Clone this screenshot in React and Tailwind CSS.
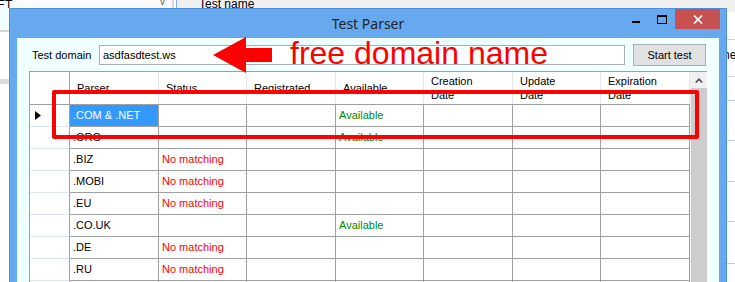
import React from 'react'

const rows = [
  { name: '.COM & .NET', status: '', avail: 'Available', selected: true },
  { name: '.ORG', status: '', avail: 'Available' },
  { name: '.BIZ', status: 'No matching', avail: '' },
  { name: '.MOBI', status: 'No matching', avail: '' },
  { name: '.EU', status: 'No matching', avail: '' },
  { name: '.CO.UK', status: '', avail: 'Available' },
  { name: '.DE', status: 'No matching', avail: '' },
  { name: '.RU', status: 'No matching', avail: '' },
  { name: '', status: '', avail: '' },
]

export default function App() {
  return (
    <div className="relative h-[282px] w-[735px] overflow-hidden bg-[#f0f0f0] font-['Liberation_Sans',Arial,sans-serif] text-[11px] text-black">
      <Backdrop />
      <ParserWindow />

      {/* annotation drawn over the screenshot */}
      <svg className="absolute left-0 top-0" width="735" height="282">
        <polygon points="213,55 246,37 246,48 272,48 272,62 246,62 246,73" fill="#ff0000" />
      </svg>
      <span className="absolute left-[290px] top-[37px] text-[32px] leading-[32px] text-[#ff0000]">free domain name</span>
      <div className="absolute left-[52px] top-[90px] h-[49px] w-[647px] rounded-[2px] border-4 border-[#ff0000]" />
    </div>
  )
}

function Backdrop() {
  return (
    <div className="flex h-full flex-col">
      <div className="flex h-[8px] overflow-hidden">
        <div className="relative w-[172px] bg-[#fbfbfb]">
          <span className="absolute -top-[4px] -left-[3px] text-[12px]">ET</span>
          <span className="absolute -top-[6px] left-[160px] text-[10px] text-[#606060]">v</span>
        </div>
        <div className="w-[2px] bg-[#d8d8d8]" />
        <div className="w-[2px] bg-white" />
        <div className="w-[1px] bg-[#7eb4ea]" />
        <div className="relative flex-1 bg-[#f0f0f0]">
          <span className="absolute -top-[5px] left-[22px] text-[12px]">Test name</span>
        </div>
      </div>
      <div className="flex flex-1">
        <div className="w-[9px] bg-white">
          <div className="h-[22px] bg-[#f0ffff]" />
          <div className="h-[2px] bg-[#d4d4d4]" />
          <div className="h-[47px]" />
          <div className="h-[5px] bg-[#dcdcdc]" />
        </div>
        <div className="flex-1" />
        <div className="w-[8px] bg-white">
          <div className="h-[4px] bg-[#f0f0f0]" />
          <div className="h-[28px] border-b border-[#d0d0d0]" />
          <div className="relative h-[37px] border-b border-[#d0d0d0]">
            <span className="absolute top-[6px] -left-[4px] text-[12px]">ne</span>
          </div>
          <div className="h-[24px] border-b border-[#b8cce8]" />
          <div className="h-[40px] border-b border-[#b8cce8]" />
          <div className="h-[41px] border-b border-[#b8cce8]" />
          <div className="h-[40px] border-b border-[#b8cce8]" />
          <div className="h-[42px] border-b border-[#b8cce8]" />
        </div>
      </div>
    </div>
  )
}

function ParserWindow() {
  return (
    <div className="absolute left-[9px] top-[8px] flex h-[290px] w-[718px] flex-col border border-[#4f8fd8] bg-[#66a9ef]">
      <div className="relative flex h-[29px] shrink-0 items-center justify-center">
        <span className="font-['Noto_Sans',sans-serif] text-[14px] text-[#222]">Test Parser</span>
        <div className="absolute left-[622px] top-[12px] h-[2px] w-[8px] bg-black" />
        <div className="absolute left-[647px] top-[6px] h-[9px] w-[10px] border border-t-2 border-black" />
        <div className="absolute right-[6px] top-0 flex h-[20px] w-[45px] items-center justify-center bg-[#c75050]">
          <svg width="10" height="9" viewBox="0 0 10 9">
            <path d="M1 0.5 L9 8.5 M9 0.5 L1 8.5" stroke="white" strokeWidth="1.7" />
          </svg>
        </div>
      </div>

      <div className="mx-[7px] flex-1 bg-[#f0ffff]">
        <div className="flex h-[22px] items-center pl-[15px] pr-[13px] pt-0 mt-[6px]">
          <span className="w-[67px]">Test domain</span>
          <div className="flex h-[20px] w-[526px] items-center border border-[#abadb3] bg-white pl-[3px]">asdfasdtest.ws</div>
          <button className="ml-[8px] h-[22px] w-[73px] border border-[#adadad] bg-[#e1e1e1] text-[11px]">Start test</button>
        </div>

        <div className="ml-[12px] mt-[5px] flex w-[678px] border-l border-t border-[#a0a0a0] bg-white">
          <div className="w-[660px]">
            <div className="flex h-[33px] border-b border-[#a0a0a0]">
              <div className="w-[40px] border-r border-[#a0a0a0]" />
              <HeadCell w="w-[89px]">Parser</HeadCell>
              <HeadCell w="w-[88px]">Status</HeadCell>
              <HeadCell w="w-[89px]">Registrated</HeadCell>
              <HeadCell w="w-[88px]">Available</HeadCell>
              <HeadCell w="w-[89px]">Creation<br />Date</HeadCell>
              <HeadCell w="w-[88px]">Update<br />Date</HeadCell>
              <HeadCell w="w-[89px]">Expiration<br />Date</HeadCell>
            </div>
            {rows.map((r, i) => (
              <div key={i} className="flex h-[22px]">
                <div className="flex w-[40px] items-center border-r border-b border-r-[#a0a0a0] border-b-[#dde7f4] pl-[5px]">
                  {r.selected && (
                    <svg width="6" height="9" viewBox="0 0 6 9"><polygon points="0,0 6,4.5 0,9" fill="black" /></svg>
                  )}
                </div>
                <Cell w="w-[89px]" selected={r.selected}>{r.name}</Cell>
                <Cell w="w-[88px]"><span className="text-[#ff0000]">{r.status}</span></Cell>
                <Cell w="w-[89px]" />
                <Cell w="w-[88px]"><span className="text-[#008a00]">{r.avail}</span></Cell>
                <Cell w="w-[89px]" />
                <Cell w="w-[88px]" />
                <Cell w="w-[89px]" />
              </div>
            ))}
          </div>
          <div className="flex w-[17px] flex-col bg-[#f0f0f0] pl-px">
            <div className="flex h-[16px] items-center justify-center">
              <svg width="8" height="5" viewBox="0 0 8 5"><path d="M0.8 4.5 L4 1.2 L7.2 4.5" stroke="#505050" strokeWidth="1.6" fill="none" /></svg>
            </div>
            <div className="flex-1 bg-[#cdcdcd]" />
          </div>
        </div>
      </div>
    </div>
  )
}

function HeadCell({ w, children }) {
  return (
    <div className={`${w} flex items-center border-r border-[#e3e9f1] pl-[7px] leading-[14px]`}>
      <span>{children}</span>
    </div>
  )
}

function Cell({ w, selected, children }) {
  return (
    <div className={`${w} flex items-center border-r border-b border-[#a0a0a0] px-[3px] ${selected ? 'bg-[#3399ff] text-white' : ''}`}>
      {children}
    </div>
  )
}
